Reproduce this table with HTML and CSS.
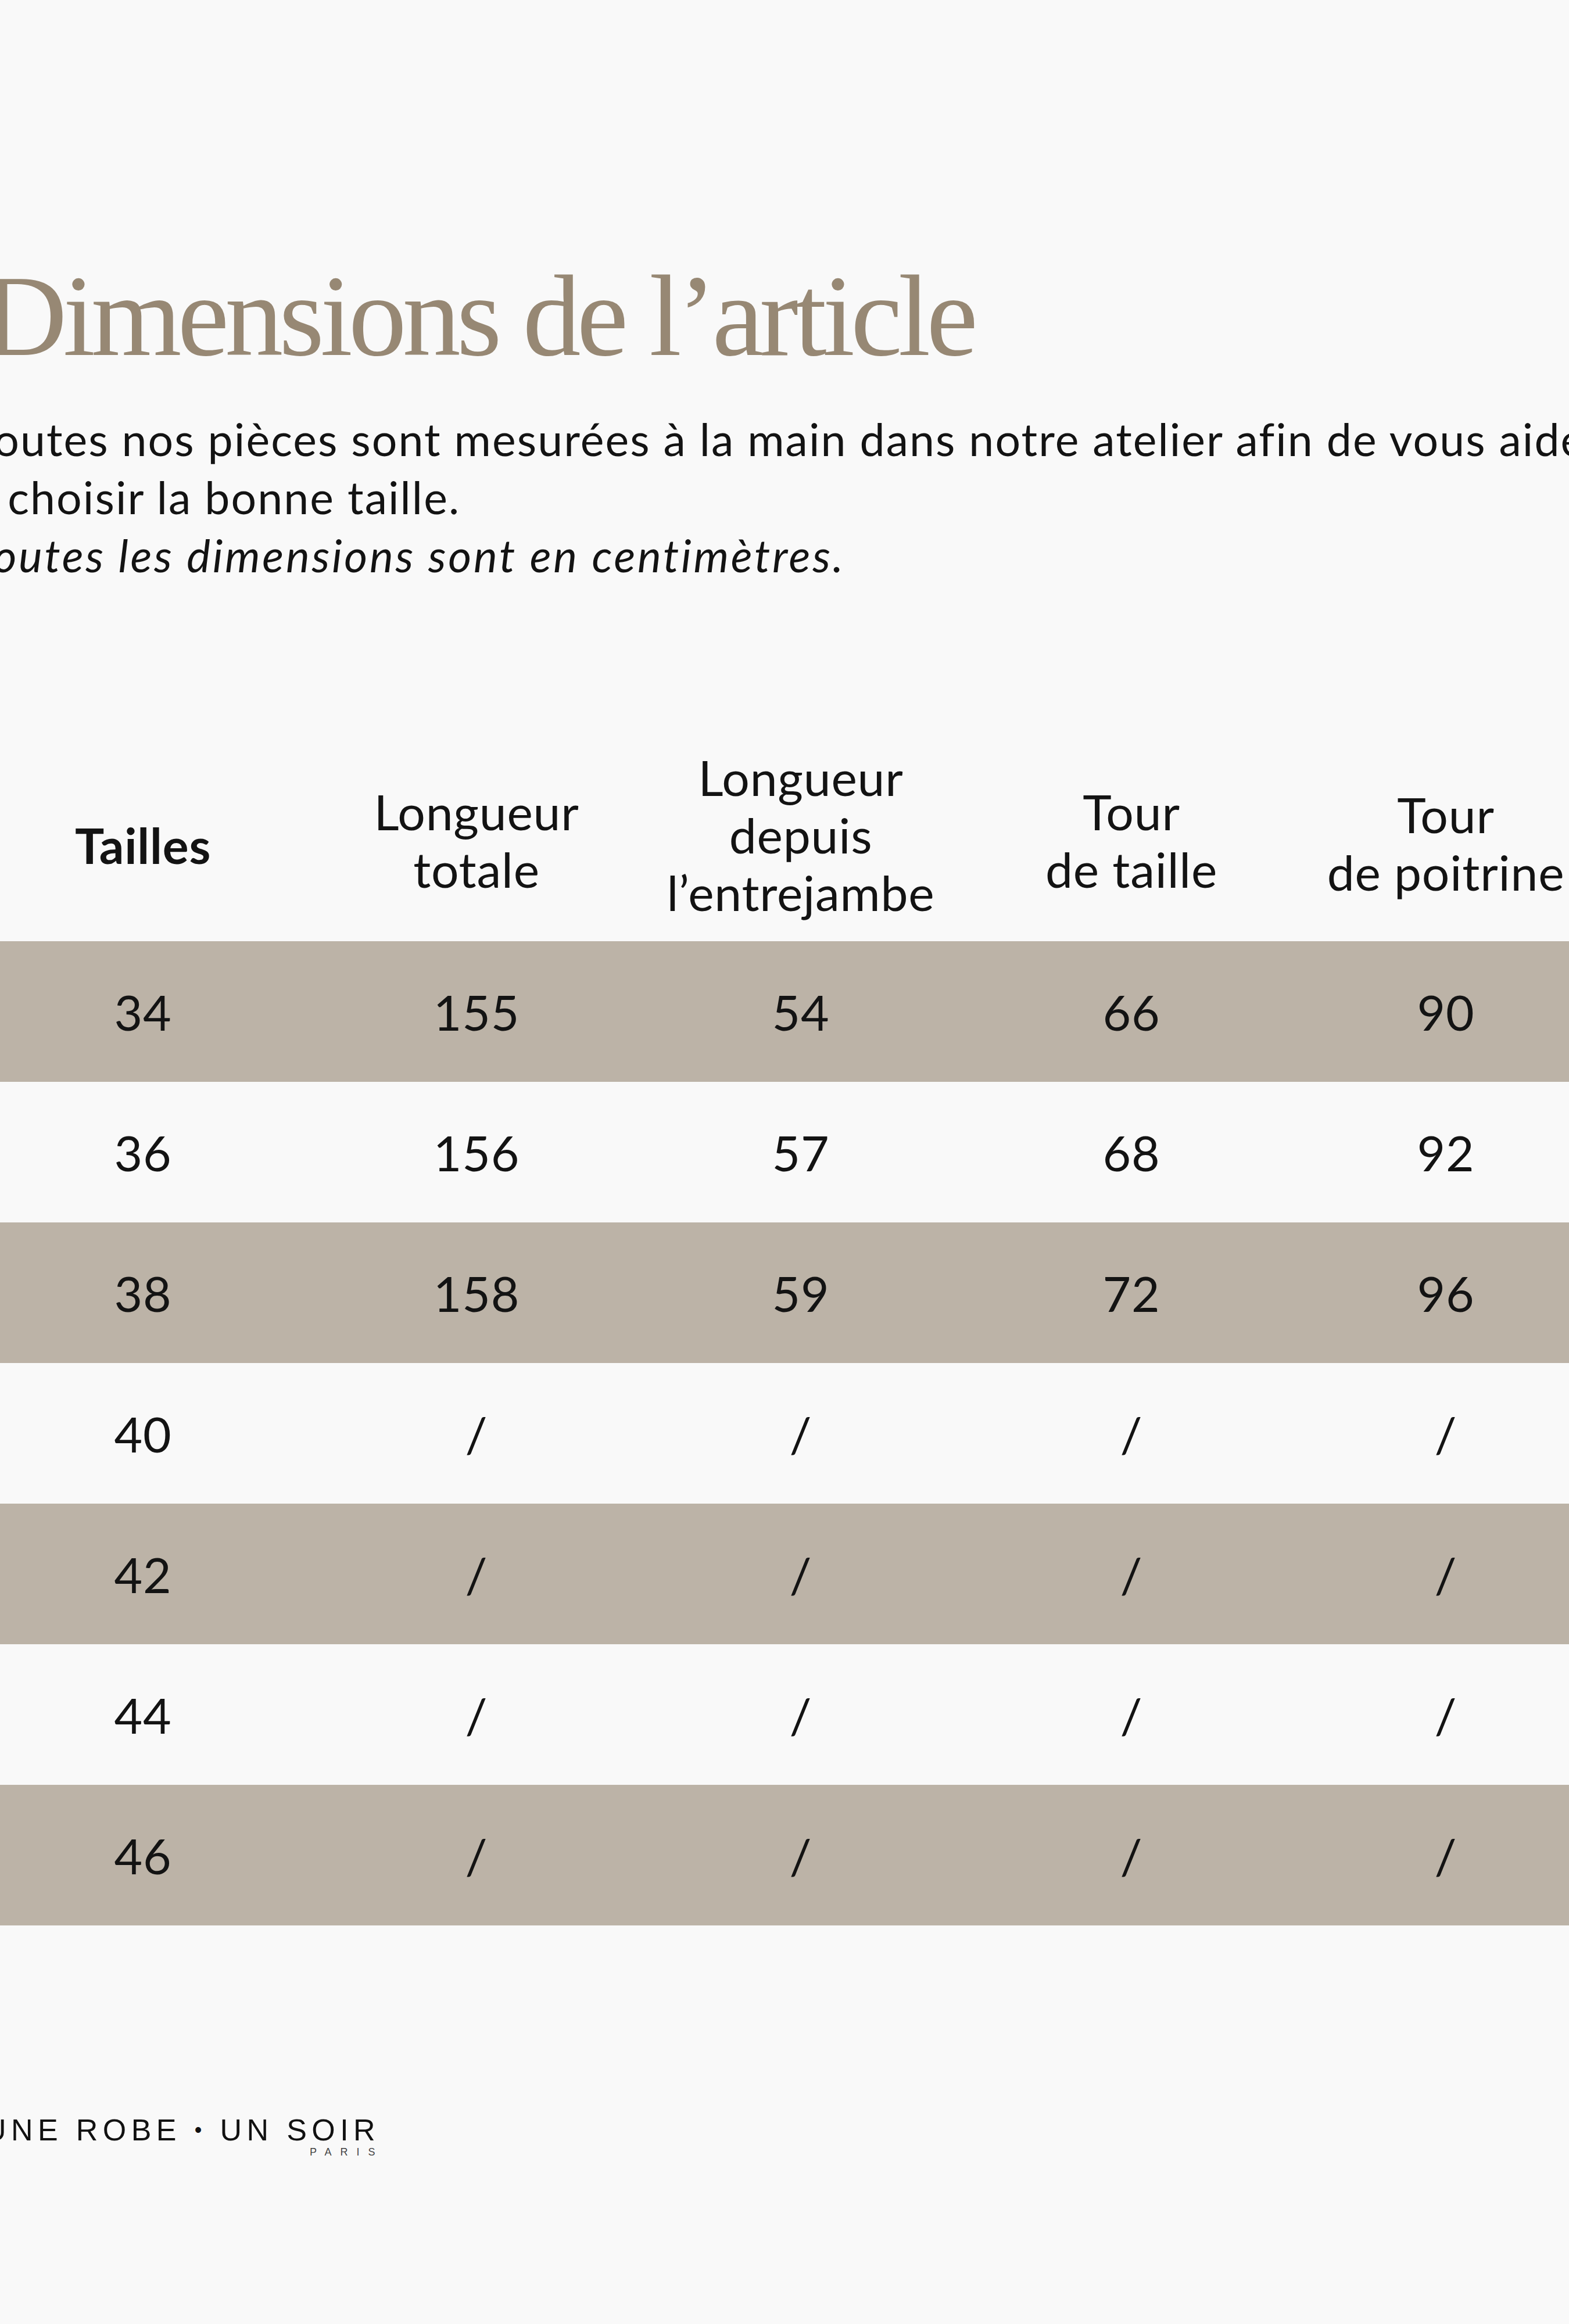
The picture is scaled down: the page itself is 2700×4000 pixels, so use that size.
FILE: index.html
```html
<!DOCTYPE html>
<html lang="fr">
<head>
<meta charset="utf-8">
<title>Dimensions de l’article</title>
<link rel="stylesheet" href="styles.css">
</head>
<body>
<main class="sheet">
  <h1 class="title">Dimensions de l’article</h1>
  <p class="intro">Toutes nos pièces sont mesurées à la main dans notre atelier afin de vous aider<br>à choisir la bonne taille.</p>
  <p class="note">Toutes les dimensions sont en centimètres.</p>

  <section class="size-table">
    <div class="row head">
      <div class="cell th strong lower">Tailles</div>
      <div class="cell th">Longueur<br>totale</div>
      <div class="cell th higher">Longueur<br>depuis<br>l’entrejambe</div>
      <div class="cell th">Tour<br>de taille</div>
      <div class="cell th low">Tour<br>de poitrine</div>
    </div>
    <div class="row shaded">
      <div class="cell">34</div><div class="cell">155</div><div class="cell">54</div><div class="cell">66</div><div class="cell">90</div>
    </div>
    <div class="row">
      <div class="cell">36</div><div class="cell">156</div><div class="cell">57</div><div class="cell">68</div><div class="cell">92</div>
    </div>
    <div class="row shaded">
      <div class="cell">38</div><div class="cell">158</div><div class="cell">59</div><div class="cell">72</div><div class="cell">96</div>
    </div>
    <div class="row">
      <div class="cell">40</div><div class="cell">/</div><div class="cell">/</div><div class="cell">/</div><div class="cell">/</div>
    </div>
    <div class="row shaded">
      <div class="cell">42</div><div class="cell">/</div><div class="cell">/</div><div class="cell">/</div><div class="cell">/</div>
    </div>
    <div class="row">
      <div class="cell">44</div><div class="cell">/</div><div class="cell">/</div><div class="cell">/</div><div class="cell">/</div>
    </div>
    <div class="row shaded">
      <div class="cell">46</div><div class="cell">/</div><div class="cell">/</div><div class="cell">/</div><div class="cell">/</div>
    </div>
  </section>

  <footer class="brand">
    <span class="brand-name">UNE ROBE <span class="dot">•</span> UN SOIR</span>
    <span class="brand-city">PARIS</span>
  </footer>
</main>
</body>
</html>
```
FILE: styles.css
```css
html, body {
  margin: 0;
  padding: 0;
  background: #f9f9f9;
  overflow: hidden;
}

.sheet {
  width: 2800px;
  margin-left: -41px;
  padding-top: 444px;
  font-family: Lato, "Open Sans", "Liberation Sans", sans-serif;
  color: #131313;
}

.title {
  margin: 0 0 0 12px;
  font-family: "Liberation Serif", "Times New Roman", serif;
  font-weight: 400;
  font-size: 200px;
  line-height: 200px;
  letter-spacing: -7px;
  color: #978874;
  white-space: nowrap;
}

.intro,
.note {
  margin: 0 0 0 -8px;
  font-size: 77px;
  line-height: 100px;
  white-space: nowrap;
}

.intro {
  margin-top: 61px;
  letter-spacing: 2.1px;
}

.note {
  font-style: italic;
  letter-spacing: 3.7px;
}

.size-table {
  margin-top: 267px;
}

.row {
  display: grid;
  grid-template-columns: 574px 574px 542px 596px 486px;
  align-items: center;
  height: 242px;
}

.row.head {
  height: 348px;
}

.row.shaded {
  background: #bcb3a7;
}

.cell {
  text-align: center;
  font-size: 84px;
  line-height: 99px;
  white-space: nowrap;
  letter-spacing: 0.8px;
}

.th.strong {
  font-weight: 700;
}

.th.lower {
  padding-top: 17px;
}

.th.low {
  padding-top: 10px;
}

.th.higher {
  padding-bottom: 19px;
}

.brand {
  margin: 327px 0 0 14px;
  display: inline-flex;
  flex-direction: column;
  align-items: flex-end;
  color: #111;
}

.brand-name {
  font-family: "Liberation Sans", Arial, sans-serif;
  font-size: 52px;
  line-height: 50px;
  letter-spacing: 8.4px;
  white-space: nowrap;
  margin-right: -8.4px;
}

.dot {
  font-size: 36px;
  vertical-align: 6px;
}

.brand-city {
  font-family: "Liberation Sans", Arial, sans-serif;
  font-size: 18px;
  line-height: 18px;
  letter-spacing: 15px;
  margin-right: -15px;
  margin-top: 4px;
  color: #444;
}
```
